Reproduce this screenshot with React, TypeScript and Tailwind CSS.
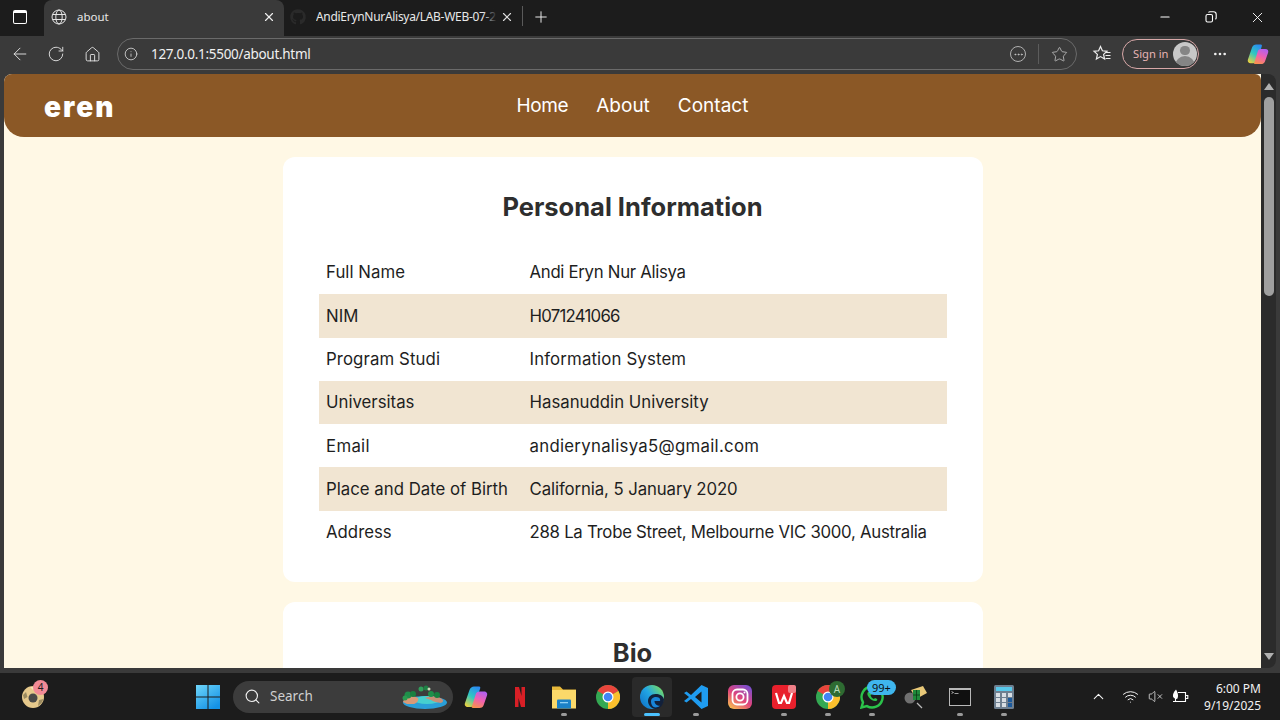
import React from "react";
import {
  ArrowLeft,
  ChevronUp,
  Ellipsis,
  Home,
  Info,
  Minus,
  Plus,
  RotateCw,
  Search,
  Star,
  VolumeX,
  Wifi,
  X,
} from "lucide-react";
import { FaGithub } from "react-icons/fa";

// last two fields nudge the letter spacing, Poppins isn't installed so Inter runs a bit off
const ROWS = [
  ["Full Name", "Andi Eryn Nur Alisya", "tracking-[0.05px]", "tracking-[-0.3px]"],
  ["NIM", "H071241066", "tracking-[0px]", "tracking-[-0.75px]"],
  ["Program Studi", "Information System", "tracking-[0.1px]", "tracking-[0.15px]"],
  ["Universitas", "Hasanuddin University", "tracking-[0px]", "tracking-[0px]"],
  ["Email", "andierynalisya5@gmail.com", "tracking-[0.3px]", "tracking-[0.28px]"],
  ["Place and Date of Birth", "California, 5 January 2020", "tracking-[0px]", "tracking-[-0.1px]"],
  ["Address", "288 La Trobe Street, Melbourne VIC 3000, Australia", "tracking-[0px]", "tracking-[-0.27px]"],
];

const CopilotIcon = ({ size = 24, id }: { size?: number; id: string }) => (
  <svg width={size} height={size} viewBox="0 0 24 24">
    <defs>
      <linearGradient id={`${id}a`} x1="0.700" y1="0" x2="0.200" y2="1">
        <stop offset="0" stopColor="#2a8cf0" />
        <stop offset="0.5" stopColor="#30c8c0" />
        <stop offset="1" stopColor="#e8d040" />
      </linearGradient>
      <linearGradient id={`${id}b`} x1="0.700" y1="0" x2="0.300" y2="1">
        <stop offset="0" stopColor="#b060f0" />
        <stop offset="0.5" stopColor="#f060b0" />
        <stop offset="1" stopColor="#f89050" />
      </linearGradient>
    </defs>
    <path d="M10 1.500h5c1.500 0 1.500 1 1 2.500L11 19c-.7 2-2 3-4 3H4c-2.500 0-3.800-1.800-3-4L5.500 5C6.300 2.800 8 1.500 10 1.500z" fill={`url(#${id}a)`} />
    <path d="M15.500 6.500H20c2.500 0 3.800 1.800 3 4l-3.500 10c-.8 1.800-2.300 2.500-4 2.500H9c-1.500 0-1.500-1-1-2L12 8.500c.5-1.300 2-2 3.500-2z" fill={`url(#${id}b)`} />
  </svg>
);

const WindowsIcon = () => (
  <svg width="24" height="24" viewBox="0 0 24 24">
    <defs>
      <linearGradient id="win" x1="0" y1="0" x2="0.700" y2="1">
        <stop offset="0" stopColor="#6fd6fa" />
        <stop offset="1" stopColor="#1492e6" />
      </linearGradient>
    </defs>
    <path d="M0 0h11.500v11.500H0zM12.500 0H24v11.500H12.500zM0 12.500h11.500V24H0zM12.500 12.500H24V24H12.500z" fill="url(#win)" />
  </svg>
);

const NetflixIcon = () => (
  <svg width="24" height="24" viewBox="0 0 24 24">
    <path d="M7 2h4l2.500 9V2H17v20h-4l-2.500-9v9H7z" fill="#d81f26" />
  </svg>
);

const FolderIcon = () => (
  <svg width="24" height="24" viewBox="0 0 24 24">
    <path d="M0 1.500h8l3 3h13V23H0z" fill="#e8b93a" />
    <rect x="0" y="5" width="24" height="18.500" fill="#fbd96a" />
    <path d="M5 15.500q0-1 1-1h12q1 0 1 1v8H5z" fill="#1c82c8" />
    <rect x="8" y="17" width="8" height="1.300" fill="#8fd0f5" />
  </svg>
);

const ChromeIcon = () => (
  <svg width="24" height="24" viewBox="0 0 24 24">
    <circle cx="12" cy="12" r="12" fill="#34a853" />
    <path d="M12 12 1.600 6A12 12 0 0 1 22.400 6z" fill="#e8453c" />
    <path d="M12 12l10.400-6A12 12 0 0 1 12 24z" fill="#fbc02d" />
    <circle cx="12" cy="12" r="5.500" fill="#fff" />
    <circle cx="12" cy="12" r="4.300" fill="#4285f4" />
  </svg>
);

const EdgeIcon = () => (
  <svg width="24" height="24" viewBox="0 0 24 24">
    <defs>
      <linearGradient id="edg" x1="0" y1="1" x2="1" y2="0.200">
        <stop offset="0" stopColor="#0c6cc4" />
        <stop offset="0.550" stopColor="#22a6e4" />
        <stop offset="1" stopColor="#78dc60" />
      </linearGradient>
    </defs>
    <circle cx="12" cy="12" r="12" fill="url(#edg)" />
    <path d="M24 14.500C23 10.500 19.500 9 15.500 9 11 9 8 12 8 16c0 4 3.500 8 7.500 8C20 24 23.500 19.500 24 14.500z" fill="#12203a" />
    <path d="M11 16.500c0-2.800 2.300-4.500 5-4.500 2.500 0 4.200 1.200 4.200 2.900 0 .8-.4 1.100-.4 1.100H14.500c0 2.800 2.300 4.800 5.500 4.800-1.200 1-2.800 1.700-4.500 1.700-2.500 0-4.500-3-4.500-6z" fill="#1884d8" />
  </svg>
);

const VSCodeIcon = () => (
  <svg width="24" height="24" viewBox="0 0 24 24">
    <path d="M17.500 0 24 3v18l-6.500 3L7 14l-4.500 3.500L0 16l5-4-5-4 2.500-1.500L7 10zM17.500 6.500 11 12l6.500 5.500z" fill="#1f9cf0" fillRule="evenodd" />
  </svg>
);

const InstagramIcon = () => (
  <svg width="24" height="24" viewBox="0 0 24 24">
    <defs>
      <linearGradient id="igr" x1="0.100" y1="1" x2="0.800" y2="0">
        <stop offset="0" stopColor="#f9c24f" />
        <stop offset="0.5" stopColor="#e0447c" />
        <stop offset="1" stopColor="#7a4fd0" />
      </linearGradient>
    </defs>
    <rect width="24" height="24" rx="6" fill="url(#igr)" />
    <rect x="4.500" y="4.500" width="15" height="15" rx="4.500" fill="none" stroke="#fff" strokeWidth="1.800" />
    <circle cx="12" cy="12" r="3.600" fill="none" stroke="#fff" strokeWidth="1.800" />
    <circle cx="16.500" cy="7.500" r="1" fill="#fff" />
  </svg>
);

const WpsIcon = () => (
  <svg width="24" height="24" viewBox="0 0 24 24">
    <rect width="24" height="24" rx="4" fill="#e8202c" />
    <path d="M4 8l3 10h2l3-7 3 7h2l3-10" fill="none" stroke="#fff" strokeWidth="2.200" />
    <rect x="16" y="0" width="8" height="8" rx="2" fill="#f08088" />
  </svg>
);

const WhatsappIcon = () => (
  <svg width="24" height="24" viewBox="0 0 24 24">
    <path d="M12 1.500a10.500 10.500 0 0 0-9 15.800L1.500 22.500l5.400-1.400A10.500 10.500 0 1 0 12 1.500z" fill="none" stroke="#2bc24a" strokeWidth="2.400" />
    <path d="M8 7c-1 1-1 3 1 5.500S13.500 16.500 16 16c1-.2 1.500-1.200 1.200-2l-2.200-1-1 1c-1.500-.5-3-2-3.500-3.500l1-1L10.500 7z" fill="#2bc24a" />
  </svg>
);

const MailToolIcon = () => (
  <svg width="24" height="24" viewBox="0 0 24 24">
    <circle cx="6" cy="13" r="5.500" fill="#707070" />
    <path d="M7 5l12-4 4 7-11 6z" fill="#e8c878" />
    <rect x="9" y="5" width="7" height="10" fill="#1f8a3a" />
    <path d="M12.500 5v10M9 10h7" stroke="#0c3a18" strokeWidth="0.800" />
    <path d="M13 18l5 5" stroke="#bbb" strokeWidth="1.200" />
  </svg>
);

const TerminalIcon = () => (
  <svg width="24" height="24" viewBox="0 0 24 24">
    <rect x="1" y="3" width="22" height="18" fill="#b8b8b8" />
    <rect x="2" y="5" width="20" height="15" fill="#101010" />
    <path d="M3.500 6.500l2 1-2 1M6.500 8.500h4" stroke="#ddd" strokeWidth="0.700" fill="none" />
  </svg>
);

const CalcIcon = () => (
  <svg width="24" height="24" viewBox="0 0 24 24">
    <rect x="2" y="0" width="20" height="24" rx="1.500" fill="#6e7f90" />
    <rect x="4" y="2" width="16" height="4" fill="#58c8ea" />
    {[8, 13, 18].map((y) =>
      [4, 10, 16].map((x) => (
        <rect
          key={`${x}-${y}`}
          x={x}
          y={y}
          width="4"
          height="4"
          fill={x === 16 && y > 8 ? "#1c5a9c" : "#d8dee4"}
        />
      ))
    )}
  </svg>
);

const SoccerIcon = () => (
  <svg width="24" height="24" viewBox="0 0 24 24">
    <circle cx="12" cy="12" r="11" fill="#e6c98c" />
    <circle cx="12" cy="13" r="4.500" fill="#4a4a48" />
    <path d="M2 10l3-3 1.500 5-3.500 2zM17 21l3.500-3 2-4-4.500 1z" fill="#9a8a60" />
    <path d="M9 2l6 0-3 3z" fill="#f4e4b8" />
  </svg>
);

const IslandIcon = () => (
  <svg width="52" height="26" viewBox="0 0 52 26">
    <ellipse cx="26" cy="18.500" rx="22" ry="6.500" fill="#2a9fd8" />
    <ellipse cx="28" cy="16" rx="13" ry="4" fill="#46d0d0" />
    <path d="M4 18c2-6 10-7 15-4 1 2-1 5-4 6H8z" fill="#d89a78" />
    <path d="M26 14c4-2 12-3 17 1 2 2 1 3-1 4-4-1-7-1-10-3z" fill="#c89078" />
    <circle cx="9" cy="11" r="3.500" fill="#1f8f4a" />
    <circle cx="14" cy="10" r="3" fill="#188040" />
    <circle cx="6" cy="14" r="2.500" fill="#2a9a50" />
    <circle cx="22" cy="5" r="2.500" fill="#2f9f5a" />
    <circle cx="27" cy="4" r="2.500" fill="#1f7f44" />
    <circle cx="32" cy="10" r="3" fill="#1f8f4a" />
    <circle cx="38" cy="11" r="3" fill="#188040" />
    <circle cx="30" cy="5" r="1.500" fill="#c8d8b8" />
  </svg>
);

const TrayBattery = () => (
  <svg width="18" height="16" viewBox="0 0 18 16" fill="none" stroke="#fff" strokeWidth="1.100">
    <path d="M7 3.500h7.500v9H2" />
    <path d="M15 6.500h1.800v3H15" />
    <path d="M5 .5C3 3 1.500 5 2 7.500 2.500 9 4 10 6 10c1.500-2 1.500-5-1-9.500z" fill="#fff" stroke="none" />
    <path d="M4.500 9v4" />
  </svg>
);

const FavoritesIcon = () => (
  <svg width="20" height="20" viewBox="0 0 20 20" fill="none" stroke="#ededed" strokeWidth="1.200">
    <path d="M8.500 2.500l1.900 4.300 4.600.5-3.400 3.100 1 4.600-4.100-2.400-4.100 2.400 1-4.600L2 7.300l4.600-.5z" />
    <path d="M14 8.500h4.500M13.500 11.500h5M13.500 14.500h5" />
  </svg>
);

const RestoreIcon = () => (
  <svg width="12" height="12" viewBox="0 0 12 12" fill="none" stroke="#fff" strokeWidth="1.100">
    <rect x="1" y="3.500" width="6.500" height="7.500" rx="1.500" />
    <path d="M3.500 1.500c.3-.5.800-.8 1.400-.8h3.600c1.500 0 2.700 1.100 2.700 2.700v3.400c0 .7-.3 1.200-.8 1.500" />
  </svg>
);

const GlobeIcon = () => (
  <svg width="16" height="16" viewBox="0 0 16 16" fill="none" stroke="#e6e6e6" strokeWidth="1">
    <circle cx="8" cy="8" r="7" />
    <ellipse cx="8" cy="8" rx="3.200" ry="7" />
    <path d="M1.500 5.500h13M1.500 10.500h13" />
  </svg>
);

const SlotIcon = ({
  children,
  dot,
  active,
}: {
  children: React.ReactNode;
  dot?: boolean;
  active?: boolean;
}) => (
  <div className="relative w-[44px] h-[40px] flex items-center justify-center">
    {active && <span className="absolute inset-y-0 inset-x-[2px] rounded bg-[#2a2a2a]" />}
    <span className="relative flex">{children}</span>
    {dot && <span className="absolute bottom-[1px] left-[19px] w-[6px] h-[3px] rounded-full bg-[#9a9a9a]" />}
    {active && <span className="absolute bottom-[1px] left-[14px] w-[16px] h-[3px] rounded-full bg-[#4cc2ff]" />}
  </div>
);

export default function App() {
  return (
    <div
      className="w-[1280px] h-[720px] overflow-hidden flex flex-col bg-[#1c1c1c]"
      style={{ fontFamily: '"Noto Sans", sans-serif' }}
    >
      {/* tab strip */}
      <div className="h-[36px] shrink-0 flex text-[#e8e8e8] text-[11.500px]">
        <div className="w-[44px] pr-[4px] pb-[2px] flex items-center justify-center">
          <div className="w-[14px] h-[14px] border-[1.500px] border-white rounded-[2px] border-t-[3px]" />
        </div>
        <div className="w-[240px] rounded-t-lg bg-[#3a3a3a] flex items-center pl-[7px] pr-[8px] pb-[3px] gap-[10px]">
          <GlobeIcon />
          <span className="flex-1">about</span>
          <X size={14} color="#eeeeee" />
        </div>
        <div className="w-[238px] flex items-center pl-[6px] pr-[8px] pb-[3px]">
          <FaGithub size={16} color="#2a2a2a" className="shrink-0 mr-[10px]" />
          <div className="relative flex-1 overflow-hidden">
            <span className="block whitespace-nowrap text-[12px] tracking-[-0.3px]">AndiErynNurAlisya/LAB-WEB-07-2</span>
            <span className="absolute inset-y-0 right-0 w-[14px] bg-gradient-to-r from-transparent to-[#1c1c1c]" />
          </div>
          <X size={14} color="#dddddd" className="ml-[3px] shrink-0" />
        </div>
        <div className="w-px h-[20px] bg-[#5a5a5a] mt-[6px]" />
        <div className="w-[36px] pb-[3px] flex items-center justify-center">
          <Plus size={18} color="#eeeeee" strokeWidth={1.300} />
        </div>
        <div className="flex-1" />
        <div className="w-[46px] flex items-center justify-center pb-[3px]"><Minus size={14} color="#fff" /></div>
        <div className="w-[46px] flex items-center justify-center pb-[2px]"><RestoreIcon /></div>
        <div className="w-[46px] flex items-center justify-center pb-[2px]"><X size={17} color="#fff" strokeWidth={1.300} /></div>
      </div>

      {/* toolbar */}
      <div className="h-[38px] shrink-0 bg-[#3a3a3a] flex items-center pl-[8px] pb-[2px] text-white">
        <div className="w-[24px] flex justify-center"><ArrowLeft size={20} strokeWidth={1.100} color="#e6e6e6" /></div>
        <div className="w-[48px] flex justify-center"><RotateCw size={18} strokeWidth={1.200} color="#e6e6e6" /></div>
        <div className="w-[24px] flex justify-center"><Home size={17} strokeWidth={1.300} color="#e6e6e6" /></div>
        <div className="ml-[13px] w-[960px] h-[32px] rounded-full border border-[#6a6a6a] flex items-center pl-[6px] pr-[8px]">
          <Info size={14} strokeWidth={1.300} color="#e6e6e6" />
          <span className="ml-[13px] text-[13.500px] tracking-[-0.3px] text-[#f0f0f0] flex-1">127.0.0.1:5500/about.html</span>
          <span className="w-[16px] h-[16px] rounded-full border border-[#b0b0b0] flex items-center justify-center mr-[12px]">
            <Ellipsis size={11} color="#c8c8c8" />
          </span>
          <span className="w-px h-[20px] bg-[#5c5c5c] mr-[12px]" />
          <Star size={17} strokeWidth={1.100} color="#c8c8c8" />
        </div>
        <div className="ml-[15px]"><FavoritesIcon /></div>
        <div className="ml-[10px] w-[77px] h-[30px] rounded-full border border-[#d8a8a8] flex items-center pl-[10px] pr-[1px] justify-between">
          <span className="text-[11.200px] text-[#e8b4b4]">Sign in</span>
          <span className="w-[24px] h-[24px] rounded-full bg-[#c8c8c8] overflow-hidden flex flex-col items-center">
            <span className="w-[10px] h-[10px] mt-[4px] rounded-full bg-[#858585]" />
            <span className="w-[20px] h-[12px] mt-[1px] rounded-t-full bg-[#858585]" />
          </span>
        </div>
        <div className="ml-[13px]"><Ellipsis size={16} color="#f0f0f0" /></div>
        <div className="ml-[19px]"><CopilotIcon size={22} id="cpt" /></div>
      </div>

      {/* viewport */}
      <div className="h-[594px] shrink-0 bg-[#3a3a3a] flex pl-[4px] overflow-hidden">
        <div
          className="w-[1257px] h-full overflow-hidden bg-[#fff8e5] rounded-tl-lg"
          style={{ fontFamily: 'Inter, "Open Sans", sans-serif' }}
        >
          <div className="h-[63px] bg-[#8b5826] rounded-b-[20px] rounded-t-[6px] grid grid-cols-[1fr_auto_1fr] items-center">
            <span className="ml-[40px] text-white text-[28px] font-black tracking-[2px] leading-none pt-[3px]">eren</span>
            <div className="flex gap-[28px] text-white text-[19px] leading-[26px] pt-[1px]">
              <span className="tracking-[-0.4px]">Home</span>
              <span>About</span>
              <span>Contact</span>
            </div>
          </div>
          <div className="w-[700px] mx-auto mt-[20px] bg-white rounded-xl px-[36px] pt-[34px] pb-[28px]">
            <h2 className="text-center text-[25.500px] leading-[32px] font-bold text-[#2e2e2e] mb-[28px]">
              Personal Information
            </h2>
            <div className="grid grid-cols-[211px_1fr] text-[16.800px] text-[#1e1e1e]">
              {ROWS.map(([label, value, labelTracking, valueTracking], i) => (
                <div
                  key={label}
                  className={`col-span-2 grid grid-cols-subgrid h-[43.300px] items-center pl-[7.500px] pt-[0.600px] ${i % 2 === 1 ? "bg-[#f1e5d2]" : ""}`}
                >
                  <span className={labelTracking}>{label}</span>
                  <span className={valueTracking}>{value}</span>
                </div>
              ))}
            </div>
          </div>
          <div className="w-[700px] mx-auto mt-[20px] bg-white rounded-t-xl px-[36px] pt-[35px] h-[200px]">
            <h2 className="text-center text-[25.500px] leading-[32px] font-bold text-[#2e2e2e]">Bio</h2>
          </div>
        </div>
        {/* scrollbar */}
        <div className="w-[15px] h-full bg-[#2b2b2b] rounded-tr-lg rounded-br-lg flex flex-col items-center pt-[9px]">
          <div className="w-0 h-0 border-l-[5px] border-r-[5px] border-b-[7px] border-l-transparent border-r-transparent border-b-[#b0b0b0]" />
          <div className="w-[10px] h-[199px] mt-[7px] rounded-full bg-[#9f9f9f]" />
          <div className="flex-1" />
          <div className="w-0 h-0 border-l-[5px] border-r-[5px] border-t-[7px] border-l-transparent border-r-transparent border-t-[#b0b0b0] mb-[8px]" />
        </div>
      </div>

      {/* frame gap */}
      <div className="h-[5px] shrink-0 bg-[#3a3a3a]" />

      {/* taskbar */}
      <div className="flex-1 flex items-center text-white">
        <div className="w-[66px] flex justify-center relative">
          <SoccerIcon />
          <span className="absolute -top-[5px] left-[33px] w-[15px] h-[15px] rounded-full bg-[#f28a96] text-[#202020] text-[10px] leading-[15px] text-center">4</span>
        </div>
        <div className="ml-[130px]"><WindowsIcon /></div>
        <div className="ml-[13px] w-[220px] h-[32px] rounded-full bg-[#3c3c3c] flex items-center pl-[11px] pr-[2px]">
          <Search size={17} color="#f0f0f0" strokeWidth={1.600} />
          <span className="ml-[9px] text-[13.500px] text-[#d0d0d0] flex-1">Search</span>
          <IslandIcon />
        </div>
        <div className="ml-[1px] flex items-center">
          <SlotIcon><CopilotIcon id="cpb" /></SlotIcon>
          <SlotIcon><NetflixIcon /></SlotIcon>
          <SlotIcon dot><FolderIcon /></SlotIcon>
          <SlotIcon><ChromeIcon /></SlotIcon>
          <SlotIcon active><EdgeIcon /></SlotIcon>
          <SlotIcon dot><VSCodeIcon /></SlotIcon>
          <SlotIcon><InstagramIcon /></SlotIcon>
          <SlotIcon dot><WpsIcon /></SlotIcon>
          <SlotIcon dot>
            <ChromeIcon />
            <span className="absolute -top-[4px] left-[13px] w-[16px] h-[16px] rounded-full bg-[#2e6b32] text-[#b8dcb8] text-[10px] leading-[16px] text-center">A</span>
          </SlotIcon>
          <SlotIcon dot>
            <WhatsappIcon />
            <span className="absolute -top-[5px] left-[7px] h-[15px] px-[5px] rounded-full bg-[#3fb6ee] text-[#101010] text-[11px] leading-[15px]">99+</span>
          </SlotIcon>
          <SlotIcon><MailToolIcon /></SlotIcon>
          <SlotIcon dot><TerminalIcon /></SlotIcon>
          <SlotIcon dot><CalcIcon /></SlotIcon>
        </div>
        <div className="flex-1" />
        <div className="flex items-center mr-[15px]">
          <ChevronUp size={17} color="#f4f4f4" strokeWidth={1.500} />
          <Wifi size={17} color="#f4f4f4" strokeWidth={1.400} className="ml-[15px]" />
          <VolumeX size={15} color="#f4f4f4" strokeWidth={1.200} className="ml-[9px]" />
          <span className="ml-[8px] flex"><TrayBattery /></span>
        </div>
        <div className="mr-[19px] text-right text-[12px] leading-[17px] text-[#f2f2f2]">
          <div>6:00 PM</div>
          <div>9/19/2025</div>
        </div>
      </div>
    </div>
  );
}
